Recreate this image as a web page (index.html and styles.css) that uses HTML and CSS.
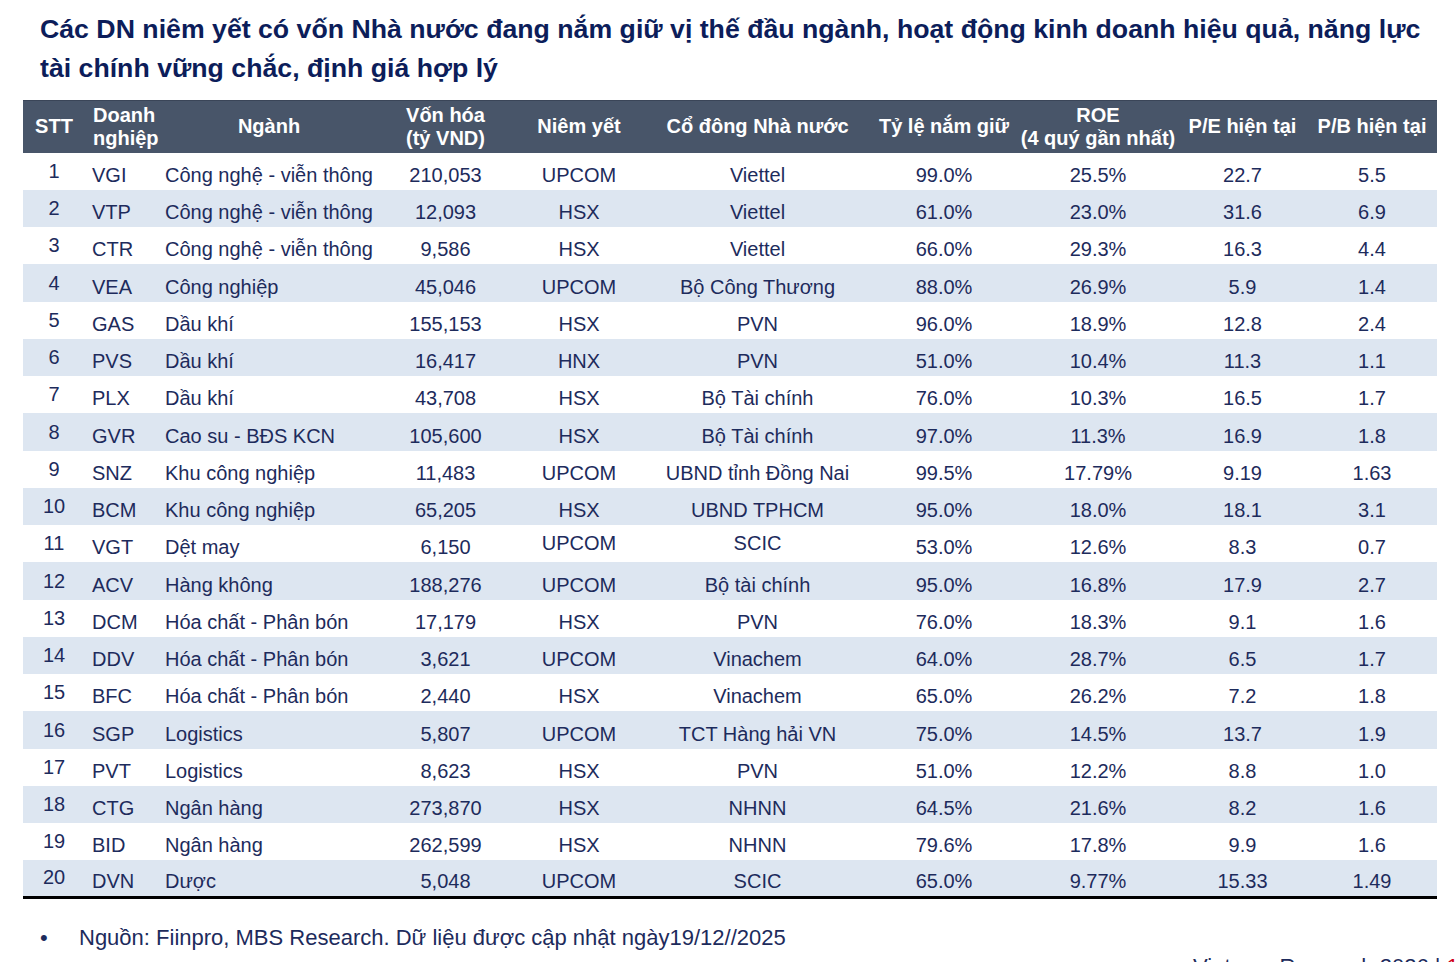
FILE: index.html
```html
<!DOCTYPE html>
<html lang="vi">
<head>
<meta charset="utf-8">
<title>Các DN niêm yết có vốn Nhà nước</title>
<link rel="stylesheet" href="styles.css">
</head>
<body>
<div class="page">
  <h1 class="title">Các DN niêm yết có vốn Nhà nước đang nắm giữ vị thế đầu ngành, hoạt động kinh doanh hiệu quả, năng lực tài chính vững chắc, định giá hợp lý</h1>
  <table class="data">
    <colgroup>
      <col class="c-stt"><col class="c-dn"><col class="c-nganh"><col class="c-von"><col class="c-ny"><col class="c-cd"><col class="c-tl"><col class="c-roe"><col class="c-pe"><col class="c-pb">
    </colgroup>
    <thead>
      <tr>
        <th>STT</th>
        <th class="left">Doanh<br>nghiệp</th>
        <th>Ngành</th>
        <th>Vốn hóa<br>(tỷ VND)</th>
        <th>Niêm yết</th>
        <th>Cổ đông Nhà nước</th>
        <th>Tỷ lệ nắm giữ</th>
        <th>ROE<br>(4 quý gần nhất)</th>
        <th>P/E hiện tại</th>
        <th>P/B hiện tại</th>
      </tr>
    </thead>
    <tbody>
      <tr><td class="stt">1</td><td class="dn">VGI</td><td class="ng">Công nghệ - viễn thông</td><td>210,053</td><td>UPCOM</td><td>Viettel</td><td>99.0%</td><td>25.5%</td><td>22.7</td><td>5.5</td></tr>
      <tr><td class="stt">2</td><td class="dn">VTP</td><td class="ng">Công nghệ - viễn thông</td><td>12,093</td><td>HSX</td><td>Viettel</td><td>61.0%</td><td>23.0%</td><td>31.6</td><td>6.9</td></tr>
      <tr><td class="stt">3</td><td class="dn">CTR</td><td class="ng">Công nghệ - viễn thông</td><td>9,586</td><td>HSX</td><td>Viettel</td><td>66.0%</td><td>29.3%</td><td>16.3</td><td>4.4</td></tr>
      <tr><td class="stt">4</td><td class="dn">VEA</td><td class="ng">Công nghiệp</td><td>45,046</td><td>UPCOM</td><td>Bộ Công Thương</td><td>88.0%</td><td>26.9%</td><td>5.9</td><td>1.4</td></tr>
      <tr><td class="stt">5</td><td class="dn">GAS</td><td class="ng">Dầu khí</td><td>155,153</td><td>HSX</td><td>PVN</td><td>96.0%</td><td>18.9%</td><td>12.8</td><td>2.4</td></tr>
      <tr><td class="stt">6</td><td class="dn">PVS</td><td class="ng">Dầu khí</td><td>16,417</td><td>HNX</td><td>PVN</td><td>51.0%</td><td>10.4%</td><td>11.3</td><td>1.1</td></tr>
      <tr><td class="stt">7</td><td class="dn">PLX</td><td class="ng">Dầu khí</td><td>43,708</td><td>HSX</td><td>Bộ Tài chính</td><td>76.0%</td><td>10.3%</td><td>16.5</td><td>1.7</td></tr>
      <tr><td class="stt">8</td><td class="dn">GVR</td><td class="ng">Cao su - BĐS KCN</td><td>105,600</td><td>HSX</td><td>Bộ Tài chính</td><td>97.0%</td><td>11.3%</td><td>16.9</td><td>1.8</td></tr>
      <tr><td class="stt">9</td><td class="dn">SNZ</td><td class="ng">Khu công nghiệp</td><td>11,483</td><td>UPCOM</td><td>UBND tỉnh Đồng Nai</td><td>99.5%</td><td>17.79%</td><td>9.19</td><td>1.63</td></tr>
      <tr><td class="stt">10</td><td class="dn">BCM</td><td class="ng">Khu công nghiệp</td><td>65,205</td><td>HSX</td><td>UBND TPHCM</td><td>95.0%</td><td>18.0%</td><td>18.1</td><td>3.1</td></tr>
      <tr><td class="stt">11</td><td class="dn">VGT</td><td class="ng">Dệt may</td><td>6,150</td><td class="hi">UPCOM</td><td class="hi">SCIC</td><td>53.0%</td><td>12.6%</td><td>8.3</td><td>0.7</td></tr>
      <tr><td class="stt">12</td><td class="dn">ACV</td><td class="ng">Hàng không</td><td>188,276</td><td>UPCOM</td><td>Bộ tài chính</td><td>95.0%</td><td>16.8%</td><td>17.9</td><td>2.7</td></tr>
      <tr><td class="stt">13</td><td class="dn">DCM</td><td class="ng">Hóa chất - Phân bón</td><td>17,179</td><td>HSX</td><td>PVN</td><td>76.0%</td><td>18.3%</td><td>9.1</td><td>1.6</td></tr>
      <tr><td class="stt">14</td><td class="dn">DDV</td><td class="ng">Hóa chất - Phân bón</td><td>3,621</td><td>UPCOM</td><td>Vinachem</td><td>64.0%</td><td>28.7%</td><td>6.5</td><td>1.7</td></tr>
      <tr><td class="stt">15</td><td class="dn">BFC</td><td class="ng">Hóa chất - Phân bón</td><td>2,440</td><td>HSX</td><td>Vinachem</td><td>65.0%</td><td>26.2%</td><td>7.2</td><td>1.8</td></tr>
      <tr><td class="stt">16</td><td class="dn">SGP</td><td class="ng">Logistics</td><td>5,807</td><td>UPCOM</td><td>TCT Hàng hải VN</td><td>75.0%</td><td>14.5%</td><td>13.7</td><td>1.9</td></tr>
      <tr><td class="stt">17</td><td class="dn">PVT</td><td class="ng">Logistics</td><td>8,623</td><td>HSX</td><td>PVN</td><td>51.0%</td><td>12.2%</td><td>8.8</td><td>1.0</td></tr>
      <tr><td class="stt">18</td><td class="dn">CTG</td><td class="ng">Ngân hàng</td><td>273,870</td><td>HSX</td><td>NHNN</td><td>64.5%</td><td>21.6%</td><td>8.2</td><td>1.6</td></tr>
      <tr><td class="stt">19</td><td class="dn">BID</td><td class="ng">Ngân hàng</td><td>262,599</td><td>HSX</td><td>NHNN</td><td>79.6%</td><td>17.8%</td><td>9.9</td><td>1.6</td></tr>
      <tr><td class="stt">20</td><td class="dn">DVN</td><td class="ng">Dược</td><td>5,048</td><td>UPCOM</td><td>SCIC</td><td>65.0%</td><td>9.77%</td><td>15.33</td><td>1.49</td></tr>
    </tbody>
  </table>
  <p class="source"><span class="bullet">•</span><span>Nguồn: Fiinpro, MBS Research. Dữ liệu được cập nhật ngày19/12//2025</span></p>
  <p class="footer">Vietnam Research 2026 <span class="bar">|</span> <span class="red">1</span></p>
</div>
</body>
</html>
```
FILE: styles.css
```css
* { box-sizing: border-box; }
html, body {
  margin: 0;
  padding: 0;
  background: #ffffff;
  overflow: hidden;
}
body {
  font-family: "Liberation Sans", Arial, sans-serif;
  color: #1d2b5c;
}
.page {
  width: 1456px;
  height: 962px;
  overflow: hidden;
}
.title {
  margin: 0;
  padding: 10px 20px 0 40px;
  font-size: 26.7px;
  line-height: 39px;
  font-weight: bold;
  color: #0c1d5a;
}
.data {
  margin: 12px 0 0 23px;
  width: 1414px;
  table-layout: fixed;
  border-collapse: collapse;
  border-spacing: 0;
}
.c-stt { width: 62px; }
.c-dn { width: 75px; }
.c-nganh { width: 218px; }
.c-von { width: 135px; }
.c-ny { width: 132px; }
.c-cd { width: 225px; }
.c-tl { width: 148px; }
.c-roe { width: 160px; }
.c-pe { width: 129px; }
.c-pb { width: 130px; }

.data thead th {
  height: 52px;
  background: #485569;
  color: #ffffff;
  font-size: 20px;
  font-weight: bold;
  line-height: 23px;
  text-align: center;
  vertical-align: middle;
  padding: 0;
  white-space: nowrap;
  border-top: 1px solid #3a4558;
}
.data thead th.left {
  text-align: left;
  padding-left: 8px;
}
.data tbody tr {
  height: 37.25px;
}
.data tbody td {
  padding: 0 0 3px 0;
  font-size: 20px;
  line-height: 23px;
  text-align: center;
  vertical-align: bottom;
  white-space: nowrap;
  color: #1d2b5c;
}
.data tbody tr:nth-child(even) td {
  background: #dde6f1;
}
.data tbody tr:last-child td {
  border-bottom: 3px solid #000000;
}
.data tbody td.stt {
  padding-bottom: 7px;
}
.data tbody td.hi {
  padding-bottom: 7px;
}
.data tbody td.dn {
  text-align: left;
  padding-left: 7px;
}
.data tbody td.ng {
  text-align: left;
  padding-left: 5px;
}
.source {
  margin: 26px 0 0 0;
  padding-left: 40px;
  display: flex;
  font-size: 22px;
  line-height: 25px;
  color: #1d2b5c;
}
.source .bullet {
  width: 39px;
}
.footer {
  margin: 4px 0 0 0;
  padding-left: 1193px;
  font-size: 22px;
  line-height: 25px;
  white-space: nowrap;
  color: #1d2b5c;
}
.footer .red {
  color: #d0021b;
}
```
